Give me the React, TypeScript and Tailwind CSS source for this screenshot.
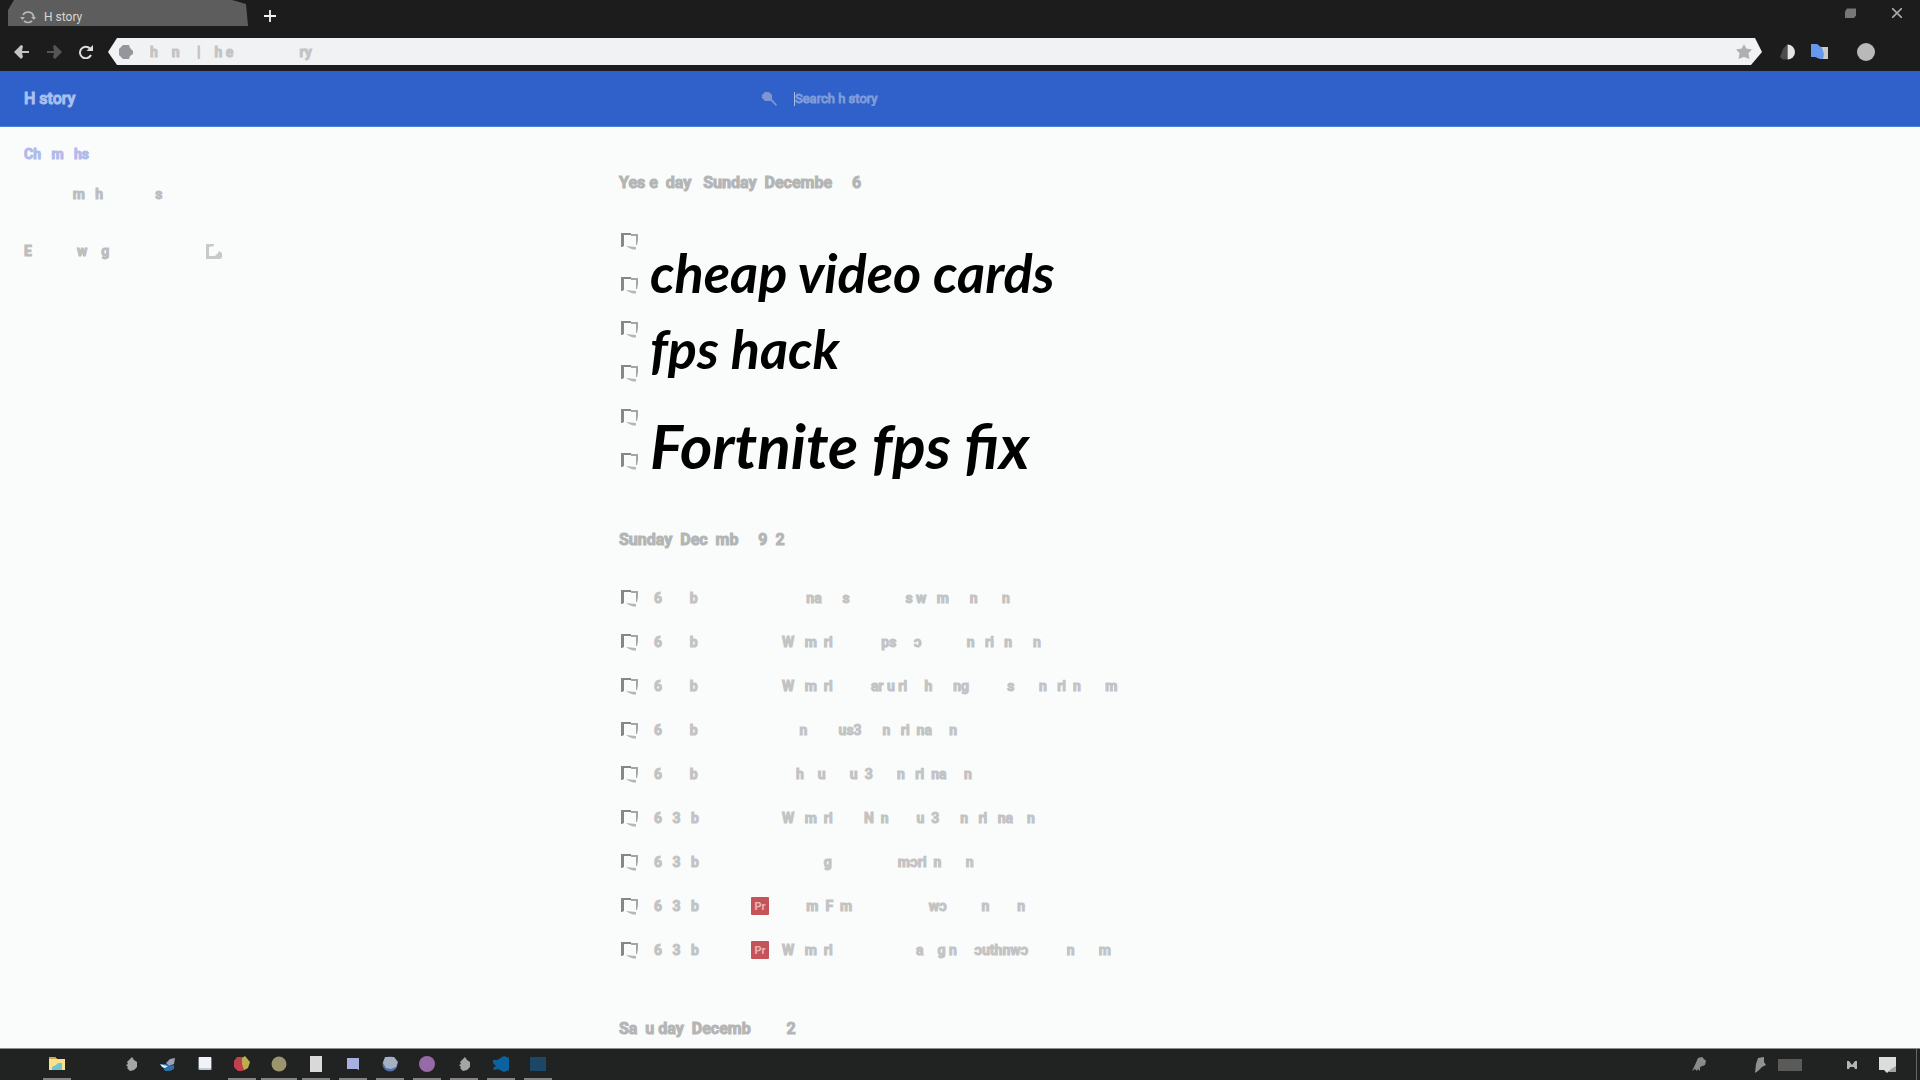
import React from "react";

type Visit = { time: string; title: string; pr?: boolean };

const SHORT = "6        b";
const LONG = "6   3   b";

const sunday: Visit[] = [
  { time: SHORT, title: "       na      s                s w   m      n       n" },
  { time: SHORT, title: "W   m  ri              ps     ɔ             n   ri   n      n" },
  { time: SHORT, title: "W   m  ri           ar u ri     h      ng           s       n   ri  n       m" },
  { time: SHORT, title: "     n         us3      n   ri  na     n" },
  { time: SHORT, title: "    h    u       u  3       n   ri  na     n" },
  { time: LONG, title: "W   m  ri         N  n        u  3      n   ri   na    n" },
  { time: LONG, title: "            g                   mɔri  n       n" },
  { time: LONG, title: "       m  F  m                      wɔ          n        n", pr: true },
  { time: LONG, title: "W   m  ri                        a    g n     ɔuthnwɔ           n       m", pr: true },
];

const smudge = "whitespace-pre [-webkit-text-stroke:1px_currentColor]";

function Tick({ label }: { label: string }) {
  return (
    <label className="grid size-[17px] shrink-0">
      <input type="checkbox" aria-label={label} className="col-start-1 row-start-1 size-full appearance-none" />
      <svg viewBox="0 0 17 17" className="pointer-events-none col-start-1 row-start-1 size-full">
        <path d="M0 0h10v2H3v11l-2 1H0z" fill="#85878d" />
        <path d="M10 1h7v6l-1 5h-1V3h-5z" fill="#a3a4a8" />
        <path d="M5 13l10 1v2.5h-3L8 15z" fill="#b5b6b8" />
      </svg>
    </label>
  );
}

function DayHeading({ children }: { children: string }) {
  return <h2 className={`mb-6 h-6 pl-px text-base leading-6 font-bold text-[#b4b5b5] ${smudge}`}>{children}</h2>;
}

function Row({ visit }: { visit: Visit }) {
  return (
    <li className="flex h-11 items-center pl-[3px] text-sm font-bold text-[#c2c3c4]">
      <Tick label="Select entry" />
      <span className={`ml-4 w-[97px] shrink-0 ${smudge}`}>{visit.time}</span>
      <span className="flex size-[18px] shrink-0 items-center justify-center">
        {visit.pr && (
          <span className="flex size-[18px] items-center justify-center rounded-[1px] bg-[#c4545a] text-[11px] leading-none font-bold text-[#eab4b5]">
            Pr
          </span>
        )}
      </span>
      <a href="#entry" className={`ml-[13px] ${smudge}`}>{visit.title}</a>
    </li>
  );
}

function Task({ label, line, children }: { label: string; line?: string; children?: React.ReactNode }) {
  return (
    <button aria-label={label} className="flex h-full w-[37px] shrink-0 flex-col items-center">
      <svg viewBox="0 0 16 16" className="mt-[7px] size-4">{children}</svg>
      {line && <span className={`mt-auto h-0.5 shrink-0 bg-[#858585] ${line}`} />}
    </button>
  );
}

const blob = <path d="M9 1l2 3 3 2v5l-3 3-4 1-3-3 1-1-2-2 2-1-1-2 2-2z" fill="#a5a5a5" />;

export default function App() {
  return (
    <div className="flex h-screen flex-col overflow-hidden bg-[#fafcfb] font-['Roboto','Liberation_Sans',sans-serif]">
      <header className="shrink-0 bg-[#1c1c1c]">
        <div className="flex h-[26px] items-center pl-2">
          <button className="flex h-full w-60 items-center bg-[#5d5d5d] pt-2 pl-3 text-xs text-[#d8d8d4] [clip-path:polygon(6px_0,224px_0,238px_4px,240px_100%,0_100%,0_10px)]">
            <svg viewBox="0 0 16 14" className="h-[14px] w-4" fill="none" stroke="#b5b5b5" strokeWidth="1.8">
              <path d="M3 5a5.500 5 0 0 1 10.500 2M12 11a6 5.500 0 0 1-8 0" />
              <path d="M0 7h5L2.500 10zM11 7h5l-2 3z" fill="#b5b5b5" stroke="none" />
            </svg>
            <span className="ml-2 whitespace-pre">H story</span>
          </button>
          <button aria-label="New tab" className="mt-1.5 ml-4">
            <svg viewBox="0 0 12 12" className="size-3" stroke="#f2f2f2" strokeWidth="1.800"><path d="M6 0v12M0 6h12" /></svg>
          </button>
          <button aria-label="Restore" className="ml-auto">
            <svg viewBox="0 0 11 10" className="size-[11px]"><path d="M2 0h9v7L9 9.500H0V3z" fill="#777" /></svg>
          </button>
          <button aria-label="Close" className="mr-[18px] ml-9">
            <svg viewBox="0 0 10 10" className="size-2.5" stroke="#a8a8a8" strokeWidth="1.600"><path d="M0 0l10 10M10 0L0 10" /></svg>
          </button>
        </div>
        <div className="flex items-center pt-3 pb-1.5 pl-3.5">
          <button aria-label="Back"><svg viewBox="0 0 15 14" className="h-3.5 w-[15px]"><path d="M0 7l7-7 2 1-1 5h7v2H8l1 4-2 2z" fill="#c4c4c4" /></svg></button>
          <button aria-label="Forward" className="ml-[18px]"><svg viewBox="0 0 15 14" className="h-3.5 w-[15px]"><path d="M15 7L8 0 6 1l1 5H0v2h7l-1 4 2 2z" fill="#555" /></svg></button>
          <button aria-label="Reload" className="ml-4">
            <svg viewBox="0 0 16 14" className="h-3.5 w-4"><path d="M12 3.500A5.800 5.800 0 1 0 13 10" fill="none" stroke="#dcdcdc" strokeWidth="2" /><path d="M15 0v6H8.500z" fill="#dcdcdc" /></svg>
          </button>
          <div className="ml-3.5 flex h-[27px] flex-1 items-center bg-[#f1f2f4] pl-[11px] [clip-path:polygon(9px_0,calc(100%-7px)_0,100%_14px,calc(100%-11px)_100%,9px_100%,0_14px)]">
            <svg viewBox="0 0 14 14" className="size-3.5 shrink-0"><path d="M4 0h6l1 3 3 3v3l-3 2-1 3H4l-4-4V4z" fill="#93969b" /></svg>
            <input
              aria-label="Address"
              defaultValue="h    n     |    h e                   ry"
              className="ml-[17px] min-w-0 flex-1 bg-transparent text-sm font-bold text-[#c3c4c5] outline-none [-webkit-text-stroke:1px_currentColor]"
            />
            <button aria-label="Bookmark" className="mr-2.5">
              <svg viewBox="0 0 16 15" className="h-[15px] w-4"><path d="M8 0l2.200 4.500L16 5.500 12.500 9l1 6L8 13l-5.500 2 1-6L0 5.500l5.800-1z" fill="#adb1b4" /></svg>
            </button>
          </div>
          <button aria-label="Contrast extension" className="ml-[18px]">
            <svg viewBox="0 0 16 16" className="size-4"><path d="M7 0.500v15H3L0 13 3 5z" fill="#4c4c4c" /><path d="M7.500 0.500a7.500 7.500 0 0 1 0 15z" fill="#e4e4e4" /></svg>
          </button>
          <button aria-label="Translate extension" className="ml-[15px]">
            <svg viewBox="0 0 17 16" className="h-4 w-[17px]"><path d="M8 3h9v12h-8z" fill="#c8cacd" /><path d="M0 0h6l5 4 2 6-1 5H9l-5-2H0z" fill="#6699ec" /></svg>
          </button>
          <button aria-label="Profile" className="mr-[45px] ml-[29px] size-[18px] rounded-full bg-[#b9b9b9]" />
        </div>
      </header>

      <div className="flex h-14 shrink-0 items-center border-b border-[#4f80dc] bg-[#3061cb]">
        <h1 className={`w-[762px] shrink-0 pl-6 text-base font-medium text-[#a9c0f0] ${smudge}`}>H story</h1>
        <svg viewBox="0 0 15 14" className="h-3.5 w-[15px]"><path d="M3 0h4l3 3v4l5 6-1 1-5-5H3L0 6V3z" fill="#7d96cf" /></svg>
        <input aria-label="Search history" placeholder="Search h story" className="ml-[17px] w-80 border-l border-[#a9bdea] bg-transparent text-[13px] leading-[14px] outline-none [-webkit-text-stroke:1px_currentColor] placeholder:text-[#7f9bd8]" />
      </div>

      <div className="flex min-h-0 flex-1">
        <nav className={`flex w-[618px] shrink-0 flex-col items-start pt-[17px] pl-6 text-sm leading-5 font-bold text-[#bcbdbe] ${smudge}`}>
          <a href="#history" className="text-[#b0bbea]">{"Ch   m   hs"}</a>
          <a href="#devices" className="mt-5">{"              m   h               s"}</a>
          <a href="#clear" className="mt-[37px] flex items-center">
            <span className="w-[182px]">{"E             w    g"}</span>
            <svg viewBox="0 0 16 15" className="h-[15px] w-4"><path d="M0 0h8v2L3 3v9h6l3-3 1-2 3 2v5l-2 1H0z" fill="#c8c9cd" /></svg>
          </a>
        </nav>
        <main className="min-w-0 flex-1">
          <section className="relative pt-11">
            <DayHeading>{"Yes e  day   Sunday  Decembe     6"}</DayHeading>
            <ul>
              {[1, 2, 3, 4, 5, 6].map((n) => (
                <li key={n} className="flex h-11 items-center pl-[3px]"><Tick label="Select entry" /></li>
              ))}
            </ul>
            <div className="absolute top-[108px] left-8 flex flex-col font-['Lato',cursive] text-[54px] leading-[76px] font-bold whitespace-nowrap text-black italic">
              <span>cheap video cards</span>
              <span>fps hack</span>
              <span className="mt-5 text-[62px] leading-[76px]">Fortnite fps fix</span>
            </div>
          </section>
          <section className="pt-[45px]">
            <DayHeading>{"Sunday  Dec  mb     9  2"}</DayHeading>
            <ul>{sunday.map((v, i) => <Row key={i} visit={v} />)}</ul>
          </section>
          <section className="pt-[45px]">
            <DayHeading>{"Sa  u day  Decemb         2"}</DayHeading>
          </section>
        </main>
      </div>

      <footer className="flex h-8 shrink-0 items-center border-t border-[#8b8d8c] bg-[#212322] pl-[38px]">
        <Task label="Files" line="w-7"><path d="M0 1h6l2 2h8v11H0z" fill="#fadf8c" /><path d="M0 1h6l2 2H0z" fill="#c7a94c" /><path d="M3 11l4-2 2-2h4v7H3z" fill="#6fc3d3" /></Task>
        <Task label="Empty" />
        <Task label="Launcher">{blob}</Task>
        <Task label="Bird"><path d="M6 7l4-4 5-1-1 6-5 2z" fill="#9ba2b8" /><path d="M1 8h5l3 2 5-1v4l-4 2H5z" fill="#2b72a8" /><path d="M0 8l3 1 5 1-3 2-3-1z" fill="#e8eef4" /></Task>
        <Task label="Store"><rect x="1.500" y="1" width="13" height="13" rx="1" fill="#b9cbd3" /><rect x="2" y="1" width="12" height="11" fill="#f2f3f6" /></Task>
        <Task label="Browser" line="w-7"><path d="M8 1v14H4L0 11V5l3-4z" fill="#c0414b" /><circle cx="7" cy="8" r="7" fill="#c0414b" /><path d="M8 2l3-2 5 6-2 6-4 2-2-6z" fill="#bcae50" /></Task>
        <Task label="Player" line="w-9"><circle cx="8" cy="8" r="7.500" fill="#9a956d" /></Task>
        <Task label="Notes" line="w-7"><path d="M2 0h12v16H2z" fill="#d9d9d9" /></Task>
        <Task label="Chat" line="w-7"><path d="M2 2h12v12l-2-1H2z" fill="#a7b0de" /></Task>
        <Task label="Music" line="w-7"><circle cx="8" cy="8" r="7.500" fill="#5470a8" /><path d="M3 1h9l4 5-2 5-5 2-5-1-3-5z" fill="#a4b1c1" /></Task>
        <Task label="Media" line="w-7"><circle cx="8" cy="8" r="8" fill="#966aa6" /></Task>
        <Task label="Game" line="w-7">{blob}</Task>
        <Task label="Editor" line="w-7"><path d="M0 4l4 0 7-4 5 2v12l-5 2-6-3-4 1-1-2 3-2-3-3z" fill="#0a639f" /></Task>
        <Task label="Designer" line="w-7"><path d="M0 1h16v14H0z" fill="#1d4767" /></Task>
        <div className="ml-auto flex items-center">
          <svg viewBox="0 0 14 15" className="h-[15px] w-3.5"><path d="M6 1l4-1 4 4-1 4-5 2 0 4-2-2-1 2-2-2-3 2 3-6z" fill="#8a8a8a" /></svg>
          <svg viewBox="0 0 12 16" className="ml-12 h-4 w-3"><path d="M4 1l6-1v5l2 3-4 2-4 4-3 2 1-9z" fill="#909090" /></svg>
          <span className="ml-3 h-3 w-6 bg-[#5a5a58]" />
          <svg viewBox="0 0 10 8" className="ml-[45px] h-2 w-2.5"><path d="M0 8V0h2l3 4 3-4h2v8H8L7 6H3L2 8z" fill="#b4b4b4" /></svg>
          <svg viewBox="0 0 17 16" className="ml-[22px] h-4 w-[17px]"><path d="M0 0h17v14H10l-2 2-3-3H0z" fill="#dcdcdc" /><path d="M17 9v6H9l3-3z" fill="#a3a3a3" /></svg>
          <span className="mr-[3px] ml-5 h-[31px] w-px bg-[#666]" />
        </div>
      </footer>
    </div>
  );
}
